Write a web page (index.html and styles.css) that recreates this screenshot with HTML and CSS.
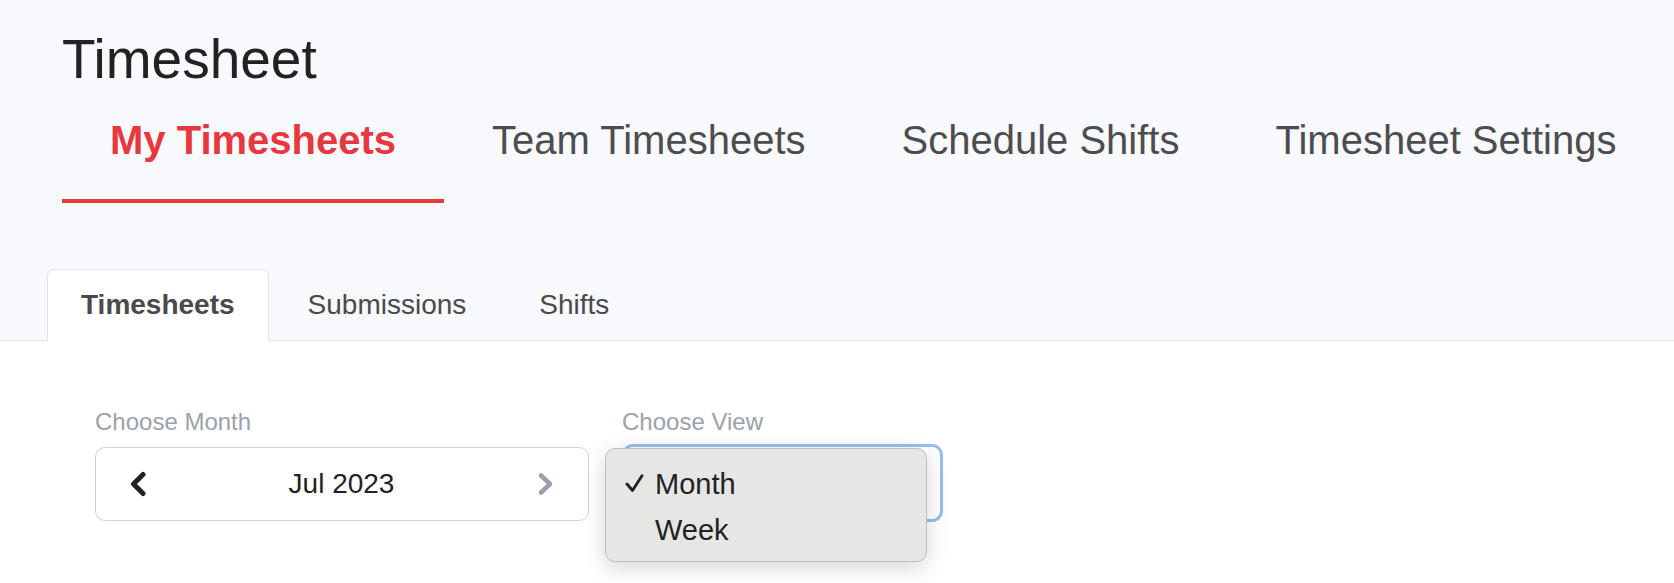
FILE: index.html
```html
<!DOCTYPE html>
<html lang="en">
<head>
<meta charset="utf-8">
<title>Timesheet</title>
<link rel="stylesheet" href="styles.css">
</head>
<body>
<header class="top">
  <h1 class="title">Timesheet</h1>
  <nav class="main-nav">
    <a class="nav-item active">My Timesheets</a>
    <a class="nav-item">Team Timesheets</a>
    <a class="nav-item">Schedule Shifts</a>
    <a class="nav-item">Timesheet Settings</a>
  </nav>
  <div class="sub-tabs">
    <a class="sub-tab active">Timesheets</a>
    <a class="sub-tab">Submissions</a>
    <a class="sub-tab">Shifts</a>
  </div>
</header>
<main class="content">
  <div class="fields">
    <div class="field field-month">
      <div class="label">Choose Month</div>
      <div class="month-box">
        <svg class="chev" width="16" height="26" viewBox="0 0 16 26"><polyline points="13,3.5 3.5,13 13,22.5" fill="none" stroke="#222" stroke-width="5" stroke-linecap="round" stroke-linejoin="round"/></svg>
        <span class="month-text">Jul 2023</span>
        <svg class="chev" width="17" height="24" viewBox="0 0 17 24"><polyline points="4,3.5 13,12 4,20.5" fill="none" stroke="#9ba1ab" stroke-width="4.5" stroke-linecap="round" stroke-linejoin="round"/></svg>
      </div>
    </div>
    <div class="field field-view">
      <div class="label">Choose View</div>
      <div class="select">
        <div class="popup">
          <div class="option checked">
            <svg class="check" width="19" height="19" viewBox="0 0 19 19"><polyline points="2,10 7.5,16.5 17,1.8" fill="none" stroke="#222" stroke-width="2.8" stroke-linecap="round" stroke-linejoin="round"/></svg>
            Month
          </div>
          <div class="option">Week</div>
        </div>
      </div>
    </div>
  </div>
</main>
</body>
</html>
```

FILE: styles.css
```css
html, body {
  margin: 0;
  padding: 0;
  background: #ffffff;
  font-family: "Liberation Sans", Arial, sans-serif;
}

body {
  min-height: 583px;
}

.top {
  background: #f8f9fc;
  border-bottom: 1px solid #e3e5ea;
}

.title {
  margin: 0;
  padding: 27px 0 0 62px;
  font-size: 55px;
  line-height: 64px;
  font-weight: 400;
  color: #222222;
}

.main-nav {
  display: flex;
  padding-left: 62px;
  margin-top: 26px;
}

.nav-item {
  padding: 0 48px 36px;
  font-size: 40px;
  line-height: 46px;
  color: #4d4d4f;
  border-bottom: 4px solid transparent;
  white-space: nowrap;
}

.nav-item.active {
  color: #e5393f;
  font-weight: 700;
  border-bottom-color: #e5393f;
}

.sub-tabs {
  display: flex;
  gap: 5px;
  padding-left: 47px;
  margin-top: 66px;
  margin-bottom: -1px;
}

.sub-tab {
  padding: 19px 33px 20px;
  font-size: 28px;
  line-height: 32px;
  color: #4a4a4c;
  border: 1px solid transparent;
  border-bottom: 0;
  border-radius: 7px 7px 0 0;
}

.sub-tab.active {
  background: #ffffff;
  border-color: #e3e5ea;
  font-weight: 700;
}

.content {
  padding: 68px 0 80px 95px;
}

.fields {
  display: flex;
  gap: 33px;
}

.label {
  font-size: 24px;
  line-height: 26px;
  color: #9ba1ab;
  white-space: nowrap;
}

.field-month {
  width: 494px;
}

.field-view {
  width: 321px;
}

.month-box {
  margin-top: 12px;
  height: 74px;
  box-sizing: border-box;
  border: 1.5px solid #cfd2d8;
  border-radius: 10px;
  background: #ffffff;
  display: flex;
  align-items: center;
  justify-content: space-between;
  padding: 0 34px 0 34px;
}

.chev {
  display: block;
}

.month-text {
  font-size: 28px;
  color: #222222;
}

.select {
  position: relative;
  margin-top: 9px;
  height: 78px;
  box-sizing: border-box;
  border: 3px solid #98bdf0;
  border-radius: 11px;
  background: #ffffff;
}

.popup {
  position: absolute;
  left: -20px;
  top: 1px;
  width: 322px;
  height: 114px;
  box-sizing: border-box;
  background: #e6e6e5;
  border: 1px solid #bfbfbf;
  border-radius: 10px;
  box-shadow: 0 6px 22px rgba(0, 0, 0, 0.16);
  padding-top: 12px;
  z-index: 2;
}

.option {
  position: relative;
  padding-left: 49px;
  font-size: 29px;
  line-height: 46px;
  color: #222222;
}

.check {
  position: absolute;
  left: 19px;
  top: 13px;
}
```
